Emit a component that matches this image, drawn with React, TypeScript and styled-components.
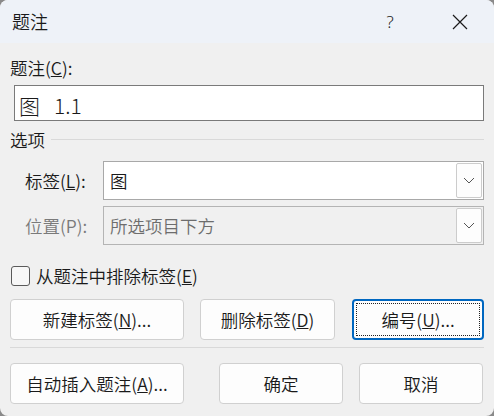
import React from 'react'
import styled, { createGlobalStyle } from 'styled-components'

const GlobalStyle = createGlobalStyle`
  html, body {
    margin: 0;
    padding: 0;
    background: #8a8a8a;
  }
  body {
    font-family: "Noto Sans CJK SC", "Noto Sans", sans-serif;
    font-weight: 350;
  }
`

const Dialog = styled.div`
  width: 494px;
  height: 416px;
  border-radius: 8px;
  overflow: hidden;
  background: #f0f0f0;
  color: #1a1a1a;
  display: flex;
  flex-direction: column;
`

const TitleBar = styled.div`
  height: 43px;
  flex: none;
  background: #eef2f8;
  display: flex;
  align-items: center;
  padding-left: 12px;
  font-size: 18px;
`

const TitleText = styled.div`
  flex: 1;
  line-height: 43px;
`

const HelpButton = styled.div`
  width: 46px;
  text-align: center;
  font-size: 17px;
  font-family: "Noto Sans", sans-serif;
  font-weight: 300;
  color: #222;
  margin-right: 24px;
`

const CloseButton = styled.div`
  width: 46px;
  height: 43px;
  display: flex;
  align-items: center;
  justify-content: center;
  margin-right: 11px;
`

const Body = styled.div`
  flex: 1;
  padding: 13px 10px 0 10px;
  display: flex;
  flex-direction: column;
  font-size: 17.5px;
`

const Label = styled.div<{ $disabled?: boolean }>`
  line-height: 24px;
  color: ${p => (p.$disabled ? '#7a7a7a' : '#1a1a1a')};
  white-space: nowrap;
`

const CaptionInput = styled.div`
  margin: 5px 0 0 4px;
  border: 1px solid #7a7a7a;
  background: #fff;
  display: flex;
  align-items: center;
  padding: 3px 0 0 4px;
  box-sizing: border-box;
  height: 36px;
  font-size: 21px;
  font-weight: 300;
  color: #1a1a1a;
  gap: 14px;
`

const GroupHeader = styled.div`
  display: flex;
  align-items: center;
  gap: 6px;
  margin-top: 7px;
  height: 24px;
`

const GroupLine = styled.div`
  flex: 1;
  height: 1px;
  background: #d9d9d9;
  margin-top: -2px;
`

const FieldRow = styled.div<{ $top: number }>`
  display: flex;
  align-items: center;
  margin-top: ${p => p.$top}px;
  padding-left: 15px;
`

const FieldLabel = styled(Label)`
  width: 78px;
`

const Select = styled.div<{ $disabled?: boolean }>`
  flex: 1;
  height: 37px;
  border: 1px solid ${p => (p.$disabled ? '#b4b4b4' : '#a8a8a8')};
  background: ${p => (p.$disabled ? '#f0f0f0' : '#fff')};
  display: flex;
  align-items: center;
  padding: 0 1px 0 6px;
  color: ${p => (p.$disabled ? '#6d6d6d' : '#1a1a1a')};
`

const SelectValue = styled.div`
  flex: 1;
`

const DropButton = styled.div`
  width: 24px;
  height: 33px;
  border: 1px solid #cccccc;
  border-radius: 2px;
  background: #fdfdfd;
  display: flex;
  align-items: center;
  justify-content: center;
`

const CheckRow = styled.div`
  display: flex;
  align-items: center;
  gap: 6px;
  margin-top: 19px;
  padding-left: 1px;
`

const CheckBox = styled.div`
  width: 17px;
  height: 18px;
  border: 1px solid #5a5a5a;
  border-radius: 3px;
  background: #f7f7f7;
`

const ButtonRow = styled.div<{ $top: number }>`
  display: flex;
  align-items: center;
  margin-top: ${p => p.$top}px;
`

const Button = styled.div<{ $width: number; $gap?: number; $focused?: boolean }>`
  box-sizing: border-box;
  width: ${p => p.$width}px;
  height: 41px;
  margin-left: ${p => p.$gap ?? 0}px;
  background: #fdfdfd;
  border: ${p => (p.$focused ? '2px solid #0067c0' : '1px solid #d0d0d0')};
  border-radius: 4px;
  display: flex;
  align-items: center;
  justify-content: center;
  position: relative;
  white-space: nowrap;
  color: #1a1a1a;

  ${p =>
    p.$focused &&
    `
    &::after {
      content: '';
      position: absolute;
      inset: 2px;
      border: 1px dotted #222;
    }
  `}
`

const Separator = styled.div`
  height: 1px;
  background: #d9d9d9;
  margin-top: 7px;
`

const Chevron = () => (
  <svg width="12" height="7" viewBox="0 0 12 7">
    <path d="M1 1 L6 6 L11 1" fill="none" stroke="#555" strokeWidth="1" />
  </svg>
)

export default function App() {
  return (
    <>
      <GlobalStyle />
      <Dialog>
        <TitleBar>
          <TitleText>题注</TitleText>
          <HelpButton>?</HelpButton>
          <CloseButton>
            <svg width="16" height="16" viewBox="0 0 16 16">
              <path d="M1 1 L15 15 M15 1 L1 15" stroke="#1a1a1a" strokeWidth="1.2" />
            </svg>
          </CloseButton>
        </TitleBar>
        <Body>
          <Label>
            题注(<u>C</u>):
          </Label>
          <CaptionInput>
            <span>图</span>
            <span>1.1</span>
          </CaptionInput>
          <GroupHeader>
            <Label>选项</Label>
            <GroupLine />
          </GroupHeader>
          <FieldRow $top={9}>
            <FieldLabel>
              标签(<u>L</u>):
            </FieldLabel>
            <Select>
              <SelectValue>图</SelectValue>
              <DropButton>
                <Chevron />
              </DropButton>
            </Select>
          </FieldRow>
          <FieldRow $top={6}>
            <FieldLabel $disabled>位置(P):</FieldLabel>
            <Select $disabled>
              <SelectValue>所选项目下方</SelectValue>
              <DropButton>
                <Chevron />
              </DropButton>
            </Select>
          </FieldRow>
          <CheckRow>
            <CheckBox />
            <Label>
              从题注中排除标签(<u>E</u>)
            </Label>
          </CheckRow>
          <ButtonRow $top={11}>
            <Button $width={174}>
              新建标签(<u>N</u>)...
            </Button>
            <Button $width={135} $gap={16}>
              删除标签(<u>D</u>)
            </Button>
            <Button $width={132} $gap={17} $focused>
              编号(<u>U</u>)...
            </Button>
          </ButtonRow>
          <Separator />
          <ButtonRow $top={15}>
            <Button $width={174}>
              自动插入题注(<u>A</u>)...
            </Button>
            <Button $width={124} $gap={35}>
              确定
            </Button>
            <Button $width={124} $gap={16}>
              取消
            </Button>
          </ButtonRow>
        </Body>
      </Dialog>
    </>
  )
}
